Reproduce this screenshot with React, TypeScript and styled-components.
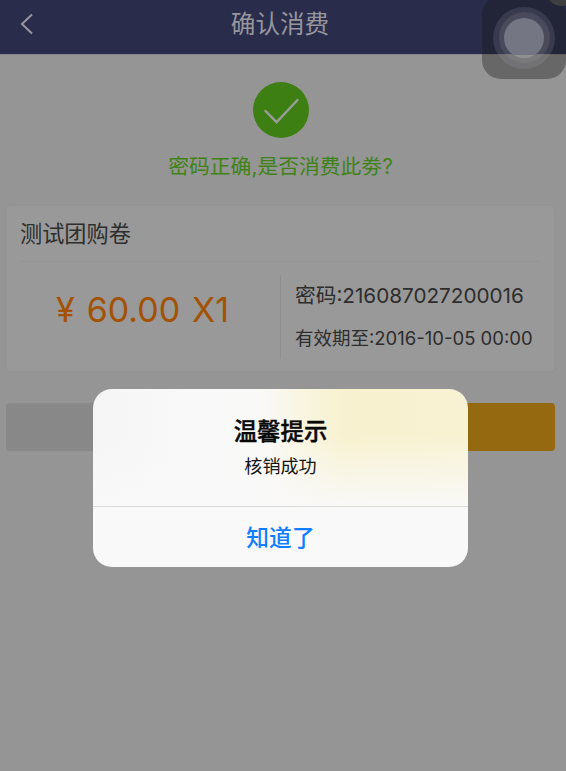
import React, { useState } from 'react';
import styled, { createGlobalStyle } from 'styled-components';

const GlobalStyle = createGlobalStyle`
  * {
    box-sizing: border-box;
  }

  body {
    margin: 0;
    background: #959595;
    font-family: Inter, "Noto Sans CJK SC", sans-serif;
  }

  button {
    padding: 0;
    border: 0;
    background: none;
    font-family: inherit;
  }
`;

const Screen = styled.div`
  position: relative;
  width: 566px;
  height: 771px;
  overflow: hidden;
  background: #959595;
`;

const Header = styled.header`
  display: grid;
  grid-template-columns: 60px 1fr 66px;
  height: 54px;
  padding-bottom: 8px;
  background: #2a2c4c;
  box-shadow: 0 1px 0 #85858b;
`;

const BackButton = styled.button`
  display: flex;
  align-items: center;
  padding-left: 20px;
`;

const Title = styled.h1`
  margin: 0;
  color: #96969b;
  font-size: 24.6px;
  font-weight: 400;
  line-height: 48px;
  text-align: center;
`;

const Result = styled.section`
  display: flex;
  flex-direction: column;
  align-items: center;
  height: 152px;
  padding: 28px 5px 0 0;
`;

const ResultText = styled.p`
  margin: 14px 0 0;
  color: #3f8317;
  font-size: 20.8px;
  line-height: 30px;
  white-space: nowrap;
`;

const Coupon = styled.section`
  width: 547px;
  height: 165px;
  margin-left: 7px;
  padding: 0 14px 0 13px;
  border-radius: 3px;
  background: #999;
  box-shadow: 0 0 2px #8c8c8c;
`;

const CouponName = styled.h2`
  height: 56px;
  margin: 0;
  border-bottom: 1px solid #949494;
  color: #2e2e2e;
  font-size: 22.2px;
  font-weight: 400;
  line-height: 55px;
`;

const CouponBody = styled.div`
  display: grid;
  grid-template-columns: 261px 1fr;
  height: 84px;
  margin-top: 13px;
`;

const Price = styled.div`
  padding-left: 36px;
  border-right: 1px solid #8e8e8e;
  color: #a35204;
  font-size: 34px;
  line-height: 69px;
  white-space: nowrap;
  word-spacing: 2.4px;
`;

const Details = styled.div`
  display: flex;
  flex-direction: column;
  gap: 12px;
  padding: 5px 0 0 14px;
  color: #2d2d2d;
  white-space: nowrap;
`;

const Detail = styled.span<{ $size: number }>`
  font-size: ${({ $size }) => $size}px;
  line-height: 31px;
`;

const Actions = styled.div`
  display: grid;
  grid-template-columns: 1fr 1fr;
  gap: 14px;
  margin: 32px 11px 0 6px;
`;

const Action = styled.button<{ $primary?: boolean }>`
  height: 48px;
  border-radius: 4px;
  background: ${({ $primary }) => ($primary ? '#956910' : '#888')};
`;

const Alert = styled.div`
  position: absolute;
  top: 389px;
  left: 93px;
  display: flex;
  flex-direction: column;
  width: 375px;
  height: 178px;
  overflow: hidden;
  border-radius: 19px;
  background:
    linear-gradient(180deg, rgba(249, 249, 249, 0) 26%, rgba(249, 249, 249, 0.5) 46%, #f9f9f9 68%),
    linear-gradient(90deg, #f5f5f6 0%, #f9f9f9 25%, #f9f9f8 45%, #f9f5e0 56%, #f8f1cf 67%, #f8f2d3 100%);
  text-align: center;
`;

const AlertContent = styled.div`
  height: 117px;
  padding-top: 25px;
`;

const AlertTitle = styled.div`
  color: #080808;
  font-size: 23.4px;
  font-weight: 500;
  line-height: 35px;
  -webkit-text-stroke: 0.4px #080808;
`;

const AlertMessage = styled.div`
  margin-top: 4px;
  color: #151515;
  font-size: 18.1px;
  line-height: 27px;
`;

const AlertButton = styled.button`
  flex: 1;
  padding-bottom: 1px;
  border-top: 1px solid #dadada;
  color: #0f7fff;
  font-size: 22.8px;
  font-weight: 500;
`;

const AssistiveTouch = styled.div`
  position: absolute;
  top: -4px;
  left: 482px;
  display: flex;
  align-items: center;
  justify-content: center;
  width: 84px;
  height: 83px;
  border-radius: 19px;
  background: rgba(22, 22, 22, 0.36);
`;

const Ring = styled.div<{ $size: number; $alpha: number }>`
  display: flex;
  flex: none;
  align-items: center;
  justify-content: center;
  width: ${({ $size }) => $size}px;
  height: ${({ $size }) => $size}px;
  border-radius: 50%;
  background: rgba(175, 175, 185, ${({ $alpha }) => $alpha});
`;

const TouchDot = styled.div`
  width: 40px;
  height: 40px;
  border-radius: 50%;
  background: linear-gradient(#757683 92%, #909091 92%);
`;

const CornerBadge = styled.div`
  position: absolute;
  top: -21px;
  left: 547px;
  width: 28px;
  height: 27px;
  border-radius: 50%;
  background: #3e3f3e;
`;

const BackIcon = () => (
  <svg width="14" height="22" viewBox="0 0 14 22" fill="none">
    <path d="M12 1.5 2 11l10 9.5" stroke="#96969b" strokeWidth="2" />
  </svg>
);

const SuccessIcon = () => (
  <svg width="56" height="56" viewBox="0 0 56 56" fill="none">
    <circle cx="28" cy="28" r="28" fill="#3d7f13" />
    <path d="m12.5 29 11 11.2L44.5 18" stroke="#9a9d98" strokeWidth="2.4" strokeLinecap="round" />
  </svg>
);

export default function App() {
  const [alertOpen, setAlertOpen] = useState(true);

  return (
    <>
      <GlobalStyle />
      <Screen>
        <Header>
          <BackButton aria-label="返回">
            <BackIcon />
          </BackButton>
          <Title>确认消费</Title>
        </Header>
        <Result>
          <SuccessIcon />
          <ResultText>密码正确,是否消费此劵?</ResultText>
        </Result>
        <Coupon>
          <CouponName>测试团购卷</CouponName>
          <CouponBody>
            <Price>¥ 60.00 X1</Price>
            <Details>
              <Detail $size={20.7}>密码:216087027200016</Detail>
              <Detail $size={18.5}>有效期至:2016-10-05 00:00</Detail>
            </Details>
          </CouponBody>
        </Coupon>
        <Actions>
          <Action aria-label="取消" />
          <Action $primary aria-label="确认" />
        </Actions>

        {alertOpen && (
          <Alert role="alertdialog">
            <AlertContent>
              <AlertTitle>温馨提示</AlertTitle>
              <AlertMessage>核销成功</AlertMessage>
            </AlertContent>
            <AlertButton onClick={() => setAlertOpen(false)}>知道了</AlertButton>
          </Alert>
        )}

        <AssistiveTouch>
          <Ring $size={62} $alpha={0.16}>
            <Ring $size={51} $alpha={0.14}>
              <TouchDot />
            </Ring>
          </Ring>
        </AssistiveTouch>
        <CornerBadge />
      </Screen>
    </>
  );
}
